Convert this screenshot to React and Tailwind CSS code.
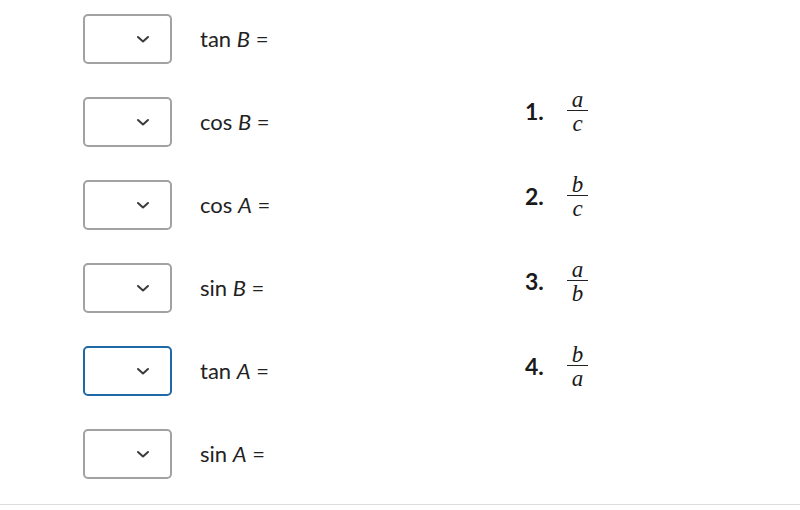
const rows = [
  { fn: "tan", v: "B" },
  { fn: "cos", v: "B" },
  { fn: "cos", v: "A" },
  { fn: "sin", v: "B" },
  { fn: "tan", v: "A", focused: true },
  { fn: "sin", v: "A" },
];

const options = [
  { n: "1.", top: "a", bottom: "c" },
  { n: "2.", top: "b", bottom: "c" },
  { n: "3.", top: "a", bottom: "b" },
  { n: "4.", top: "b", bottom: "a" },
];

function Chevron() {
  return (
    <svg width="14" height="9" viewBox="0 0 14 9" fill="none">
      <path d="M2 2l5 4.5L12 2" stroke="#3a3a3a" strokeWidth="2" strokeLinecap="round" strokeLinejoin="round" />
    </svg>
  );
}

function Fraction({ top, bottom }) {
  return (
    <div className="flex flex-col items-center w-[21px] italic text-[23px] text-[#1a1a1a] font-['Liberation_Serif',serif]">
      <span className="leading-[20px]">{top}</span>
      <div className="w-full border-t border-[#222]" />
      <span className="leading-[20px] mt-[3px]">{bottom}</span>
    </div>
  );
}

export default function App() {
  return (
    <div className="w-[800px] h-[510px] bg-white flex flex-col font-['Lato',sans-serif]">
      <div className="flex h-[504px]">
        {/* Dropdowns */}
        <div className="w-[525px] pl-[83px] pt-[14px] flex flex-col gap-[33px]">
          {rows.map((r, i) => (
            <div key={i} className="flex items-center h-[50px]">
              <div
                className={`w-[89px] h-[50px] rounded-[5px] flex items-center justify-end pr-[20px] ${
                  r.focused ? "border-2 border-[#1f6aa6]" : "border-2 border-[#a2a2a2]"
                }`}
              >
                <Chevron />
              </div>
              <div className="ml-[28px] text-[22px] text-[#222] leading-none">
                {r.fn}&nbsp;<span className="italic">{r.v}</span> =
              </div>
            </div>
          ))}
        </div>

        {/* Options */}
        <div className="pt-[90px] flex flex-col gap-[41px]">
          {options.map((o) => (
            <div key={o.n} className="flex items-center">
              <span className="w-[42px] pb-[1px] text-[23px] font-bold text-[#1a1a1a] leading-none">{o.n}</span>
              <Fraction top={o.top} bottom={o.bottom} />
            </div>
          ))}
        </div>
      </div>
      <div className="border-t border-[#dcdcdc]" />
    </div>
  );
}
